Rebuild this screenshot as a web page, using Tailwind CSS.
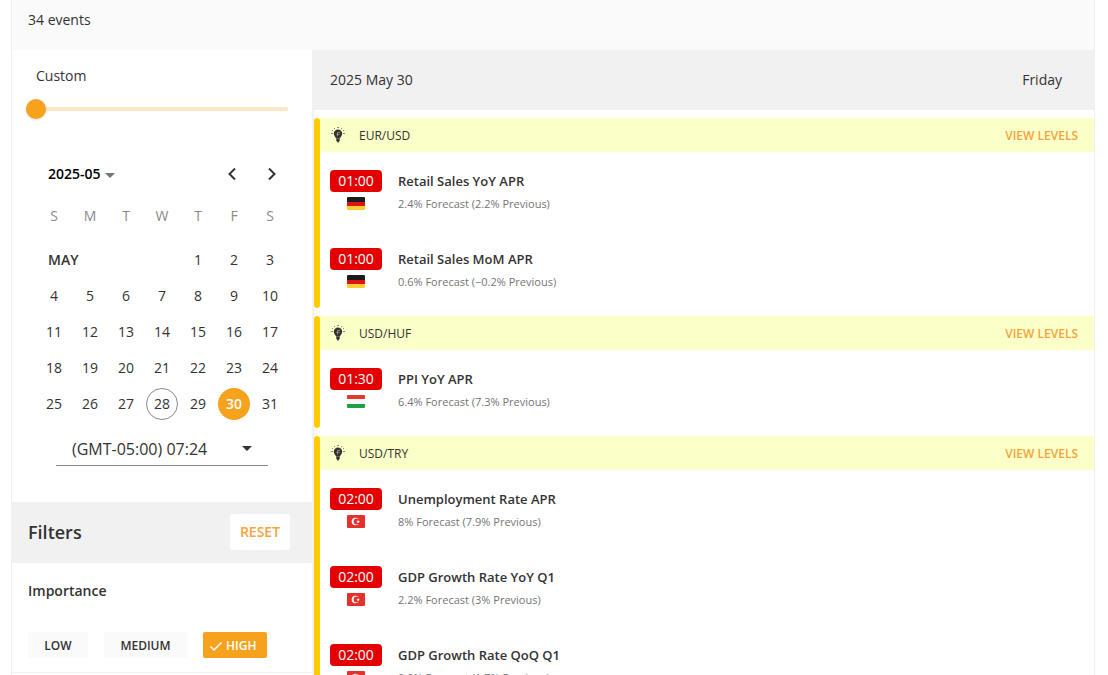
<!DOCTYPE html>
<html lang="en">

<head>
  <meta charset="utf-8" />
  <meta name="viewport" content="width=device-width, initial-scale=1" />
  <title>Economic Calendar</title>
  <script src="https://cdn.jsdelivr.net/npm/@tailwindcss/browser@4"></script>
</head>

<body class="h-screen overflow-hidden bg-white font-['Open_Sans','Noto_Sans',sans-serif] text-sm text-[#333333]">
  <!-- Shared icons -->
  <svg class="hidden">
    <symbol id="bulb" viewBox="0 0 16 18">
      <g fill="#8c8c72">
        <rect x="7" y="0" width="2" height="1" />
        <rect x="4" y="1" width="1" height="1" />
        <rect x="11" y="1" width="1" height="1" />
        <rect x="2" y="3" width="1" height="1" />
        <rect x="13" y="3" width="1" height="1" />
        <rect x="1" y="6" width="2" height="1" />
        <rect x="13" y="6" width="2" height="1" />
      </g>
      <path d="M8 2.600a4.200 4.200 0 0 0-4.200 4.200c0 2 1.700 3 2.200 4.600h4c.5-1.600 2.200-2.600 2.200-4.600A4.200 4.200 0 0 0 8 2.600z" fill="#333333" />
      <path d="M6.300 11.400h3.400v2L8 16l-1.700-2.600z" fill="#333333" />
      <path d="M10 5.500H7.500v3.800M6.300 7.300h3.400" stroke="#a0a088" stroke-width=".8" fill="none" />
    </symbol>
    <symbol id="flag-de" viewBox="0 0 18 13">
      <path d="M0 0h18v5H0z" fill="#1c1c1c" />
      <path d="M0 5h18v4H0z" fill="#dc1414" />
      <path d="M0 9h18v4H0z" fill="#ffcc33" />
    </symbol>
    <symbol id="flag-hu" viewBox="0 0 18 13">
      <path d="M0 0h18v4H0z" fill="#e43a2c" />
      <path d="M0 4h18v5H0z" fill="#f7f7f7" />
      <path d="M0 9h18v4H0z" fill="#20a045" />
    </symbol>
    <symbol id="flag-tr" viewBox="0 0 18 13">
      <path d="M0 0h18v13H0z" fill="#e4312b" />
      <circle cx="8.500" cy="6.500" r="3.800" fill="#ffffff" />
      <circle cx="9.600" cy="6.500" r="3" fill="#e4312b" />
      <path d="M11 5l.5 1 1.200.1-.9.8.3 1.200-1.100-.6-1.100.6.3-1.200-.9-.8 1.200-.1z" fill="#ffffff" />
    </symbol>
  </svg>

  <div class="ml-[11px] mr-[13px] border-x border-[#f1f1f1]">
    <!-- Event count -->
    <header class="h-[50px] bg-[#fafafa] px-4 pt-2.5">
      <p>34 events</p>
    </header>

    <div class="flex">
      <!-- Sidebar -->
      <aside class="w-[300px] shrink-0">
        <div class="flex h-[452px] flex-col pt-4">
          <label for="range" class="pl-6">Custom</label>
          <input id="range" type="range" min="0" max="10" value="0"
            class="mt-[13px] ml-3.5 h-5 w-[262px] appearance-none bg-transparent [&::-webkit-slider-runnable-track]:h-1 [&::-webkit-slider-runnable-track]:rounded-full [&::-webkit-slider-runnable-track]:bg-[#fde6c4] [&::-webkit-slider-thumb]:-mt-2 [&::-webkit-slider-thumb]:size-5 [&::-webkit-slider-thumb]:appearance-none [&::-webkit-slider-thumb]:rounded-full [&::-webkit-slider-thumb]:bg-[#f6a21d] [&::-webkit-slider-thumb]:shadow" />

          <!-- Calendar -->
          <div class="mx-6 mt-[37px] flex h-9 items-center justify-between pl-3">
            <button class="flex items-center gap-1 font-semibold text-black">
              2025-05
              <svg class="mt-0.5 h-[5px] w-2.5" viewBox="0 0 10 5">
                <path d="M0 0l5 5 5-5z" fill="#757575" />
              </svg>
            </button>
            <div class="flex">
              <button aria-label="Previous month" class="flex size-10 items-center justify-center">
                <svg class="h-3 w-2" viewBox="0 0 8 12" fill="none" stroke="#333333" stroke-width="2">
                  <path d="M7 .5L1.500 6 7 11.500" />
                </svg>
              </button>
              <button aria-label="Next month" class="-mr-1 flex size-10 items-center justify-center">
                <svg class="h-3 w-2" viewBox="0 0 8 12" fill="none" stroke="#333333" stroke-width="2">
                  <path d="M1 .5L6.500 6 1 11.500" />
                </svg>
              </button>
            </div>
          </div>
          <table class="mx-6 mt-2 w-[252px] table-fixed text-center">
            <thead class="text-[#8a8a8a]">
              <tr class="h-8">
                <th class="font-normal">S</th>
                <th class="font-normal">M</th>
                <th class="font-normal">T</th>
                <th class="font-normal">W</th>
                <th class="font-normal">T</th>
                <th class="font-normal">F</th>
                <th class="font-normal">S</th>
              </tr>
              <tr class="h-2.5"></tr>
            </thead>
            <tbody>
              <tr class="h-9">
                <td colspan="4" class="pl-3 text-left font-semibold">MAY</td>
                <td>1</td><td>2</td><td>3</td>
              </tr>
              <tr class="h-9"><td>4</td><td>5</td><td>6</td><td>7</td><td>8</td><td>9</td><td>10</td></tr>
              <tr class="h-9"><td>11</td><td>12</td><td>13</td><td>14</td><td>15</td><td>16</td><td>17</td></tr>
              <tr class="h-9"><td>18</td><td>19</td><td>20</td><td>21</td><td>22</td><td>23</td><td>24</td></tr>
              <tr class="h-9">
                <td>25</td>
                <td>26</td>
                <td>27</td>
                <td><button class="size-8 rounded-full border border-[#8a8a8a]">28</button></td>
                <td>29</td>
                <td><button class="size-8 rounded-full bg-[#f6a21d] font-semibold text-white">30</button></td>
                <td>31</td>
              </tr>
            </tbody>
          </table>

          <!-- Timezone -->
          <div class="relative mx-11 mt-2.5">
            <select aria-label="Timezone" class="h-[34px] w-full appearance-none border-b border-[#8a8a8a] pl-4 text-base">
              <option>(GMT-05:00) 07:24</option>
            </select>
            <svg class="pointer-events-none absolute top-3.5 right-4 h-[5px] w-2.5" viewBox="0 0 10 5">
              <path d="M0 0l5 5 5-5z" fill="#333333" />
            </svg>
          </div>
        </div>

        <!-- Filters -->
        <div class="flex h-[61px] items-start justify-between bg-[#f1f1f1] pt-3 pr-[22px] pl-4">
          <h2 class="text-lg leading-9 font-semibold">Filters</h2>
          <button class="h-9 w-[60px] rounded bg-white text-sm font-semibold text-[#f6a33c]">RESET</button>
        </div>
        <div class="border-b border-[#f1f1f1] px-4 pt-[18px] pb-3.5">
          <h3 class="font-semibold">Importance</h3>
          <div class="mt-[31px] flex gap-4 text-xs font-semibold">
            <button class="h-[26px] w-[60px] bg-[#fafafa] pt-0.5">LOW</button>
            <button class="h-[26px] w-[83px] bg-[#fafafa] pt-0.5">MEDIUM</button>
            <button aria-pressed="true"
              class="flex h-[26px] w-16 items-center gap-1 rounded-xs bg-[#f6a21d] pt-0.5 pl-[7px] text-white">
              <svg class="h-2.5 w-3" viewBox="0 0 12 10" fill="none" stroke="#ffffff" stroke-width="1.500">
                <path d="M.5 5.500l3.500 3.500L11.500 1.500" />
              </svg>
              HIGH
            </button>
          </div>
        </div>
      </aside>

      <!-- Events -->
      <main class="min-w-0 flex-1 border-l-2 border-[#f1f1f1]">
        <div class="flex h-[60px] items-center justify-between bg-[#f1f1f1] pr-8 pl-4">
          <h2>2025 May 30</h2>
          <span>Friday</span>
        </div>

        <div class="flex flex-col gap-2 pt-2">
          <section class="flex">
            <div class="w-1.5 rounded-full bg-[#ffcc00]"></div>
            <div class="flex-1">
              <div class="flex h-[34px] items-center bg-[#fbffc8] pt-0.5 pr-4 pl-2.5 text-xs">
                <svg class="h-[18px] w-4"><use href="#bulb" /></svg>
                <h3 class="ml-[13px]">EUR/USD</h3>
                <a href="#" class="ml-auto font-semibold text-[#f6a33c]">VIEW LEVELS</a>
              </div>
              <article class="flex h-[78px] gap-4 pt-[18px] pl-2.5">
                <div class="flex w-[52px] flex-col items-center gap-[5px]">
                  <time class="h-[22px] w-full rounded bg-[#e40000] text-center leading-[22px] font-medium text-white">01:00</time>
                  <svg class="h-[13px] w-[18px] rounded-[1px]"><use href="#flag-de" /></svg>
                </div>
                <div>
                  <h4 class="text-[13px] leading-[22px] font-semibold">Retail Sales YoY APR</h4>
                  <p class="mt-1 text-[11px] leading-4 text-[#757575]">2.4% Forecast (2.2% Previous)</p>
                </div>
              </article>
              <article class="flex h-[78px] gap-4 pt-[18px] pl-2.5">
                <div class="flex w-[52px] flex-col items-center gap-[5px]">
                  <time class="h-[22px] w-full rounded bg-[#e40000] text-center leading-[22px] font-medium text-white">01:00</time>
                  <svg class="h-[13px] w-[18px] rounded-[1px]"><use href="#flag-de" /></svg>
                </div>
                <div>
                  <h4 class="text-[13px] leading-[22px] font-semibold">Retail Sales MoM APR</h4>
                  <p class="mt-1 text-[11px] leading-4 text-[#757575]">0.6% Forecast (−0.2% Previous)</p>
                </div>
              </article>
            </div>
          </section>

          <section class="flex">
            <div class="w-1.5 rounded-full bg-[#ffcc00]"></div>
            <div class="flex-1">
              <div class="flex h-[34px] items-center bg-[#fbffc8] pt-0.5 pr-4 pl-2.5 text-xs">
                <svg class="h-[18px] w-4"><use href="#bulb" /></svg>
                <h3 class="ml-[13px]">USD/HUF</h3>
                <a href="#" class="ml-auto font-semibold text-[#f6a33c]">VIEW LEVELS</a>
              </div>
              <article class="flex h-[78px] gap-4 pt-[18px] pl-2.5">
                <div class="flex w-[52px] flex-col items-center gap-[5px]">
                  <time class="h-[22px] w-full rounded bg-[#e40000] text-center leading-[22px] font-medium text-white">01:30</time>
                  <svg class="h-[13px] w-[18px] rounded-[1px]"><use href="#flag-hu" /></svg>
                </div>
                <div>
                  <h4 class="text-[13px] leading-[22px] font-semibold">PPI YoY APR</h4>
                  <p class="mt-1 text-[11px] leading-4 text-[#757575]">6.4% Forecast (7.3% Previous)</p>
                </div>
              </article>
            </div>
          </section>

          <section class="flex">
            <div class="w-1.5 rounded-full bg-[#ffcc00]"></div>
            <div class="flex-1">
              <div class="flex h-[34px] items-center bg-[#fbffc8] pt-0.5 pr-4 pl-2.5 text-xs">
                <svg class="h-[18px] w-4"><use href="#bulb" /></svg>
                <h3 class="ml-[13px]">USD/TRY</h3>
                <a href="#" class="ml-auto font-semibold text-[#f6a33c]">VIEW LEVELS</a>
              </div>
              <article class="flex h-[78px] gap-4 pt-[18px] pl-2.5">
                <div class="flex w-[52px] flex-col items-center gap-[5px]">
                  <time class="h-[22px] w-full rounded bg-[#e40000] text-center leading-[22px] font-medium text-white">02:00</time>
                  <svg class="h-[13px] w-[18px] rounded-[1px]"><use href="#flag-tr" /></svg>
                </div>
                <div>
                  <h4 class="text-[13px] leading-[22px] font-semibold">Unemployment Rate APR</h4>
                  <p class="mt-1 text-[11px] leading-4 text-[#757575]">8% Forecast (7.9% Previous)</p>
                </div>
              </article>
              <article class="flex h-[78px] gap-4 pt-[18px] pl-2.5">
                <div class="flex w-[52px] flex-col items-center gap-[5px]">
                  <time class="h-[22px] w-full rounded bg-[#e40000] text-center leading-[22px] font-medium text-white">02:00</time>
                  <svg class="h-[13px] w-[18px] rounded-[1px]"><use href="#flag-tr" /></svg>
                </div>
                <div>
                  <h4 class="text-[13px] leading-[22px] font-semibold">GDP Growth Rate YoY Q1</h4>
                  <p class="mt-1 text-[11px] leading-4 text-[#757575]">2.2% Forecast (3% Previous)</p>
                </div>
              </article>
              <article class="flex h-[78px] gap-4 pt-[18px] pl-2.5">
                <div class="flex w-[52px] flex-col items-center gap-[5px]">
                  <time class="h-[22px] w-full rounded bg-[#e40000] text-center leading-[22px] font-medium text-white">02:00</time>
                  <svg class="h-[13px] w-[18px] rounded-[1px]"><use href="#flag-tr" /></svg>
                </div>
                <div>
                  <h4 class="text-[13px] leading-[22px] font-semibold">GDP Growth Rate QoQ Q1</h4>
                  <p class="mt-1 text-[11px] leading-4 text-[#757575]">0.9% Forecast (1.7% Previous)</p>
                </div>
              </article>
            </div>
          </section>
        </div>
      </main>
    </div>
  </div>
</body>

</html>
